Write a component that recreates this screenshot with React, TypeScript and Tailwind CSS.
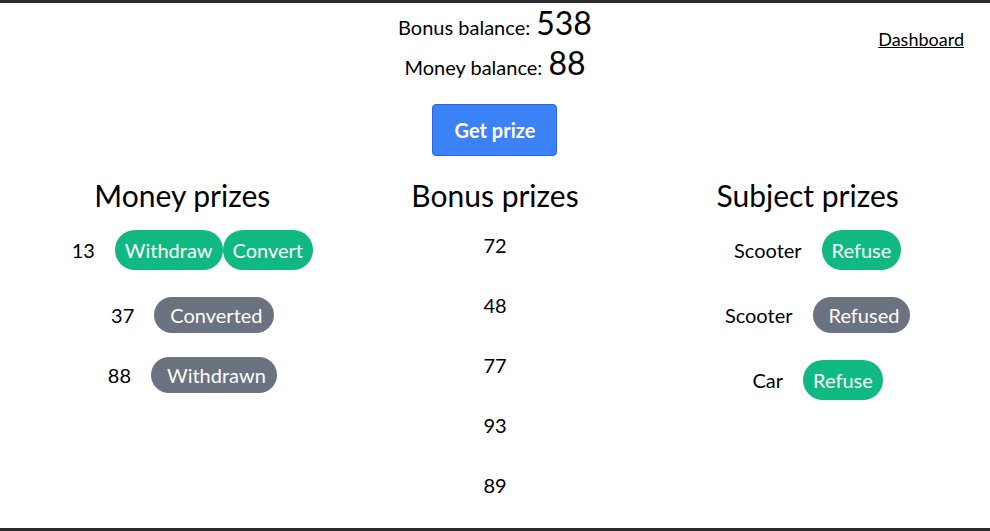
import React from 'react';

type MoneyPrize = { amount: number; status: 'new' | 'converted' | 'withdrawn' };
type SubjectPrize = { name: string; refused: boolean };

const moneyPrizes: MoneyPrize[] = [
  { amount: 13, status: 'new' },
  { amount: 37, status: 'converted' },
  { amount: 88, status: 'withdrawn' },
];

const bonusPrizes = [72, 48, 77, 93, 89];

const subjectPrizes: SubjectPrize[] = [
  { name: 'Scooter', refused: false },
  { name: 'Scooter', refused: true },
  { name: 'Car', refused: false },
];

const ActionButton: React.FC<{ label: string }> = ({ label }) => (
  <button className="my-[3px] h-10 rounded-full bg-[#10b981] px-[10px] text-xl text-white">
    {label}
  </button>
);

const StatusBadge: React.FC<{ label: string }> = ({ label }) => (
  <span className="flex h-9 items-center rounded-full bg-[#6b7280] pl-4 pr-[11px] text-xl text-white">
    {label}
  </span>
);

const App: React.FC = () => {
  return (
    <div className="flex min-h-[531px] flex-col bg-white text-black" style={{ fontFamily: "Lato, 'Noto Sans', sans-serif" }}>
      <div className="h-[3px] bg-[#2b2b2b]" />

      <div className="flex-1 px-[26px]">
        {/* Header */}
        <div className="grid grid-cols-3">
          <div />
          <div className="flex flex-col items-center">
            <div className="flex h-10 items-baseline">
              <span className="text-xl">Bonus balance:</span>
              <span className="ml-1.5 text-[32px] leading-10">538</span>
            </div>
            <div className="flex h-10 items-baseline">
              <span className="text-xl">Money balance:</span>
              <span className="ml-1.5 text-[32px] leading-10">88</span>
            </div>
            <button className="mt-[21px] h-[52px] w-[125px] rounded border border-[#2563eb] bg-[#3b82f6] text-xl font-bold text-white">
              Get prize
            </button>
          </div>
          <div className="pt-[22px] text-right">
            <a href="#" className="text-lg underline">Dashboard</a>
          </div>
        </div>

        {/* Prize columns */}
        <div className="mt-[21px] grid grid-cols-3">
          <div className="flex flex-col items-center">
            <h2 className="text-3xl leading-9">Money prizes</h2>
            <div className="mt-[14px] flex flex-col items-center gap-6">
              {moneyPrizes.map((p, i) => (
                <div key={i} className="flex items-center">
                  <span className="mx-5 text-xl">{p.amount}</span>
                  {p.status === 'new' && (
                    <>
                      <ActionButton label="Withdraw" />
                      <ActionButton label="Convert" />
                    </>
                  )}
                  {p.status === 'converted' && <StatusBadge label="Converted" />}
                  {p.status === 'withdrawn' && <StatusBadge label="Withdrawn" />}
                </div>
              ))}
            </div>
          </div>

          <div className="flex flex-col items-center">
            <h2 className="text-3xl leading-9">Bonus prizes</h2>
            <div className="mt-[14px] flex flex-col items-center gap-6">
              {bonusPrizes.map((b, i) => (
                <div key={i} className="flex h-9 items-center">
                  <span className="mx-5 text-xl">{b}</span>
                </div>
              ))}
            </div>
          </div>

          <div className="flex flex-col items-center">
            <h2 className="text-3xl leading-9">Subject prizes</h2>
            <div className="mt-[14px] flex flex-col items-center gap-6">
              {subjectPrizes.map((s, i) => (
                <div key={i} className="flex items-center">
                  <span className="mx-5 text-xl">{s.name}</span>
                  {s.refused ? <StatusBadge label="Refused" /> : <ActionButton label="Refuse" />}
                </div>
              ))}
            </div>
          </div>
        </div>
      </div>

      <div className="h-[3px] bg-[#2b2b2b]" />
    </div>
  );
};

export default App;
